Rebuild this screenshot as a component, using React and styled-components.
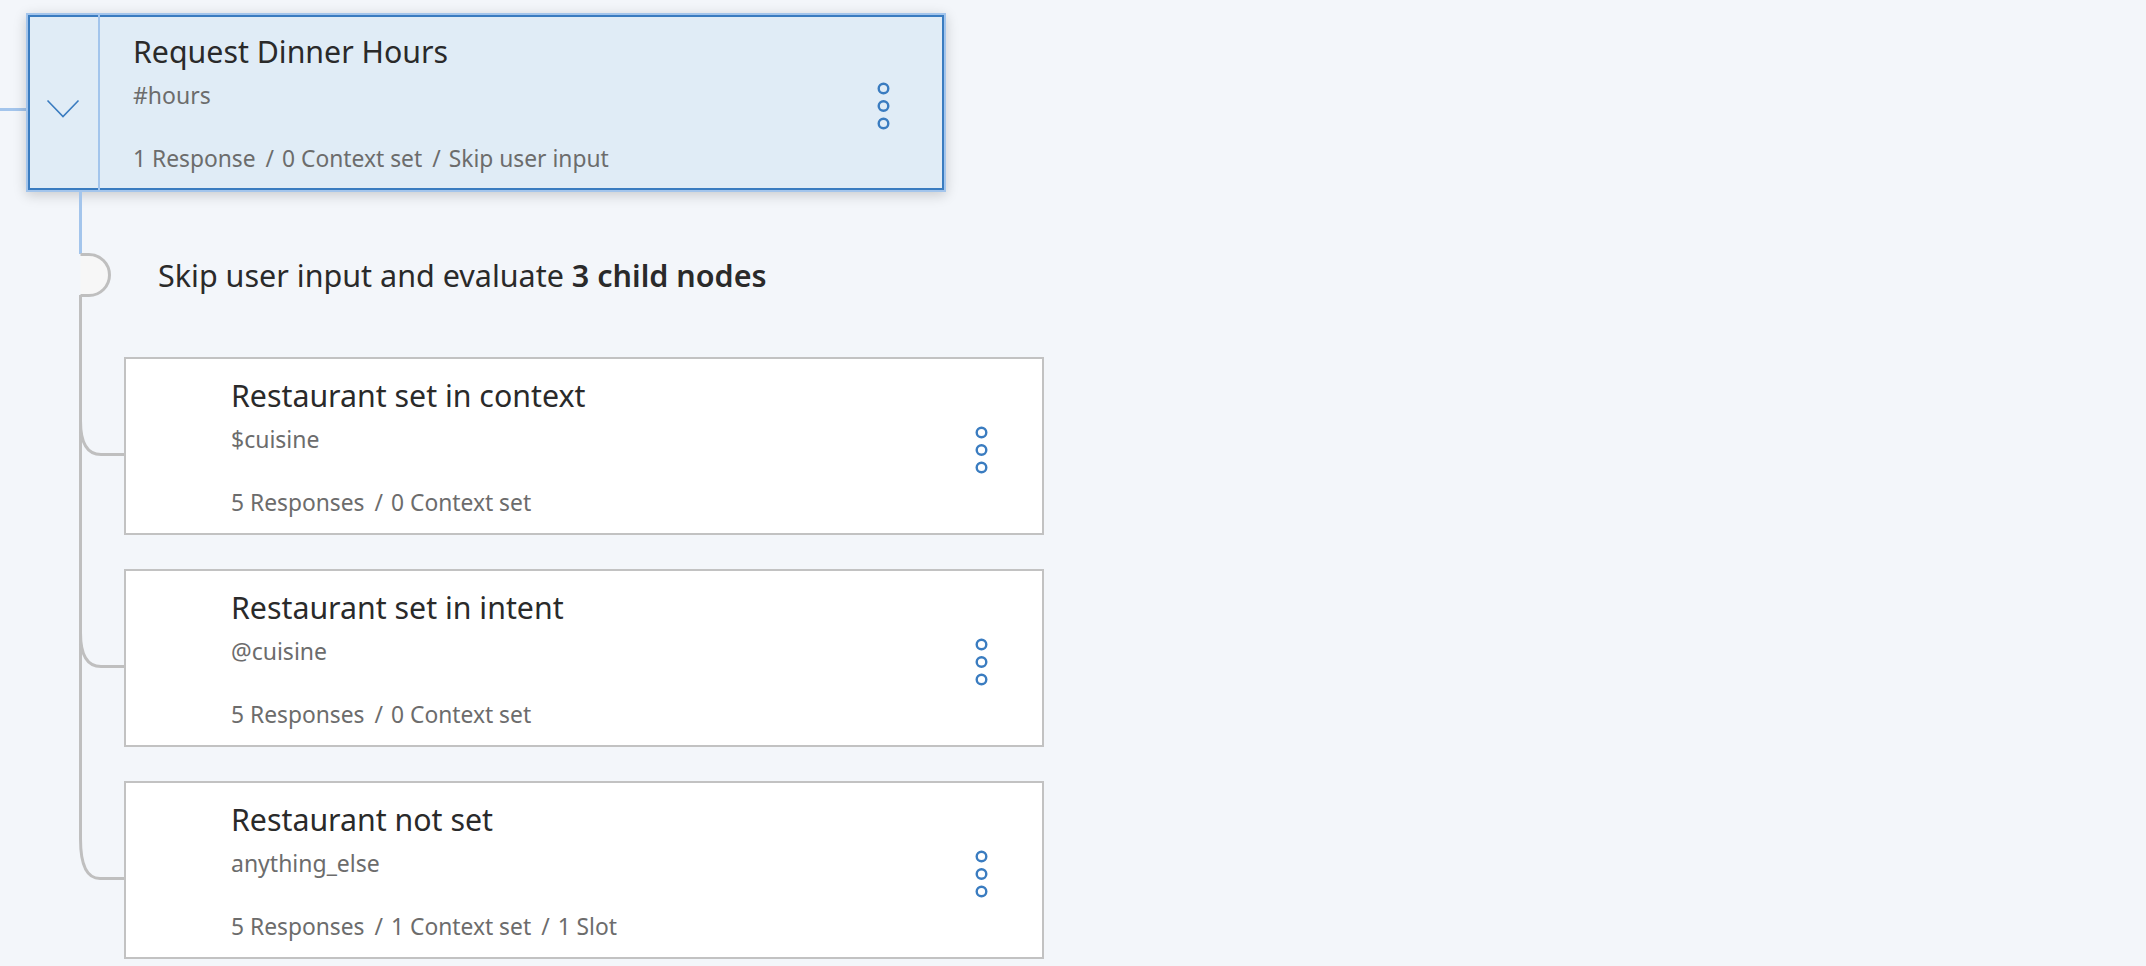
import React from "react";
import styled, { createGlobalStyle } from "styled-components";

const GlobalStyle = createGlobalStyle`
  body {
    margin: 0;
    background: #f3f6fa;
    font-family: "Noto Sans", "Open Sans", sans-serif;
  }
`;

const Canvas = styled.div`
  min-height: 966px;
  padding-top: 13px;
  box-sizing: border-box;
  background: #f3f6fa;
`;

const ParentRow = styled.div`
  display: flex;
  align-items: flex-start;
`;

const Stub = styled.div`
  width: 26px;
  height: 3px;
  margin-top: 95px;
  background: #a3c5ec;
`;

const Card = styled.div`
  display: flex;
  width: 920px;
  height: ${(p) => (p.selected ? "179px" : "178px")};
  box-sizing: border-box;
  border: 2px solid ${(p) => (p.selected ? "#a3c5ec" : "#c2c2c2")};
  background: ${(p) => (p.selected ? "#e0ecf6" : "#ffffff")};
  box-shadow: ${(p) =>
    p.selected
      ? "inset 0 0 0 2px #3a7cc0, 0 3px 12px rgba(0, 0, 0, 0.18)"
      : "none"};
`;

const Toggle = styled.div`
  width: 72px;
  flex: none;
  border-right: 2px solid ${(p) => (p.selected ? "#a3c5ec" : "transparent")};
  display: flex;
  justify-content: center;
  padding-top: 84px;
  box-sizing: border-box;

  svg {
    display: block;
  }
`;

const Body = styled.div`
  flex: 1;
  padding: 18px 0 0 33px;
  display: flex;
  flex-direction: column;
  min-width: 0;
`;

const Title = styled.div`
  font-size: 30.3px;
  line-height: 38px;
  color: #2a2a2a;
  white-space: nowrap;
`;

const Condition = styled.div`
  margin-top: 9px;
  font-size: 23px;
  line-height: 30px;
  color: #6c6c6c;
`;

const Meta = styled.div`
  margin-top: 34px;
  font-size: 22.8px;
  line-height: 30px;
  color: #6c6c6c;
  display: flex;
  white-space: nowrap;
`;

const Sep = styled.span`
  margin: 0 8px 0 10px;
`;

const Menu = styled.button`
  align-self: flex-start;
  margin: 66px 53px 0 0;
  padding: 0;
  border: none;
  background: none;
  width: 15px;
  height: 50px;
  cursor: pointer;

  svg {
    display: block;
  }
`;

const NoteRow = styled.div`
  display: flex;
  align-items: center;
`;

const Rail = styled.svg`
  display: block;
  flex: none;
  width: 124px;
`;

const Note = styled.div`
  margin-left: 34px;
  font-size: 30.5px;
  line-height: 40px;
  color: #2a2a2a;
  white-space: nowrap;

  b {
    font-weight: 600;
  }
`;

const ChildRow = styled.div`
  display: flex;
  align-items: flex-start;
`;

const ChildCard = styled(Card)`
  margin-bottom: ${(p) => (p.last ? "0" : "34px")};
`;

const BLUE_LINE = "#a3c5ec";
const GRAY_LINE = "#bfbfbf";

const Chevron = () => (
  <svg width="34" height="20" viewBox="0 0 34 20">
    <polyline
      points="1.5,1.5 17,17.5 32.5,1.5"
      fill="none"
      stroke="#3a7cc0"
      strokeWidth="1.6"
    />
  </svg>
);

const Kebab = () => (
  <svg width="15" height="50" viewBox="0 0 15 50">
    {[7.5, 25, 42.5].map((cy) => (
      <circle
        key={cy}
        cx="7.5"
        cy={cy}
        r="4.8"
        fill="none"
        stroke="#3a7cc0"
        strokeWidth="2.4"
      />
    ))}
  </svg>
);

const NodeCard = ({ node, selected, last, as }) => {
  const Wrapper = as || Card;
  return (
    <Wrapper selected={selected} last={last}>
      <Toggle selected={selected}>{selected && <Chevron />}</Toggle>
      <Body>
        <Title>{node.title}</Title>
        <Condition>{node.condition}</Condition>
        <Meta>
          {node.meta.map((m, i) => (
            <React.Fragment key={m}>
              {i > 0 && <Sep>/</Sep>}
              <span>{m}</span>
            </React.Fragment>
          ))}
        </Meta>
      </Body>
      <Menu aria-label="Node options">
        <Kebab />
      </Menu>
    </Wrapper>
  );
};

const parent = {
  title: "Request Dinner Hours",
  condition: "#hours",
  meta: ["1 Response", "0 Context set", "Skip user input"],
};

const children = [
  {
    title: "Restaurant set in context",
    condition: "$cuisine",
    meta: ["5 Responses", "0 Context set"],
  },
  {
    title: "Restaurant set in intent",
    condition: "@cuisine",
    meta: ["5 Responses", "0 Context set"],
  },
  {
    title: "Restaurant not set",
    condition: "anything_else",
    meta: ["5 Responses", "1 Context set", "1 Slot"],
  },
];

const Branch = ({ last }) => {
  const h = last ? 178 : 212;
  return (
    <Rail height={h} viewBox={`0 0 124 ${h}`}>
      {last ? (
        <path
          d="M80.5 0 V58 C80.5 86 88 97.5 100 97.5 H124"
          fill="none"
          stroke={GRAY_LINE}
          strokeWidth="3"
        />
      ) : (
        <>
          <path d="M80.5 0 V212" stroke={GRAY_LINE} strokeWidth="3" />
          <path
            d="M80.5 64 C80.5 88 88 97.5 101 97.5 H124"
            fill="none"
            stroke={GRAY_LINE}
            strokeWidth="3"
          />
        </>
      )}
    </Rail>
  );
};

const App = () => {
  return (
    <>
      <GlobalStyle />
      <Canvas>
        <ParentRow>
          <Stub />
          <NodeCard node={parent} selected />
        </ParentRow>

        <NoteRow>
          <Rail height="165" viewBox="0 0 124 165">
            <path d="M80.5 0 V62" stroke={BLUE_LINE} strokeWidth="3" />
            <path
              d="M80.5 62.5 H89 A20.5 20.5 0 0 1 89 103.5 H80.5"
              fill="#f7f7f7"
              stroke={GRAY_LINE}
              strokeWidth="3"
            />
            <path d="M80.5 103 V165" stroke={GRAY_LINE} strokeWidth="3" />
          </Rail>
          <Note>
            Skip user input and evaluate <b>3 child nodes</b>
          </Note>
        </NoteRow>

        {children.map((c, i) => (
          <ChildRow key={c.title}>
            <Branch last={i === children.length - 1} />
            <NodeCard
              node={c}
              as={ChildCard}
              last={i === children.length - 1}
            />
          </ChildRow>
        ))}
      </Canvas>
    </>
  );
};

export default App;
